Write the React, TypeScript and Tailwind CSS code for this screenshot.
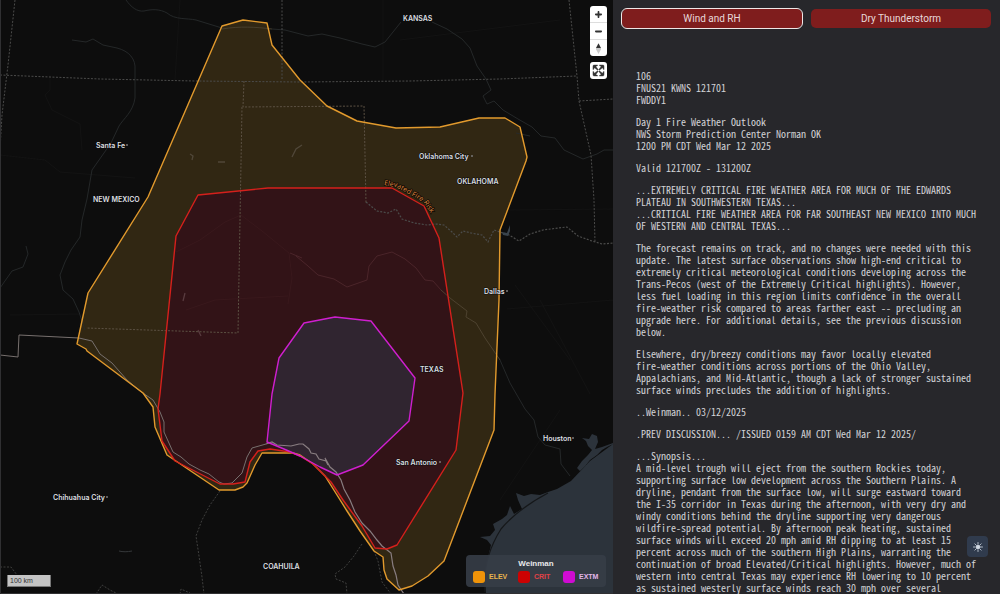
import { useState } from 'react';

const DISCUSSION: string[] = [
  `106
FNUS21 KWNS 121701
FWDDY1`,
  `Day 1 Fire Weather Outlook
NWS Storm Prediction Center Norman OK
1200 PM CDT Wed Mar 12 2025`,
  `Valid 121700Z - 131200Z`,
  `...EXTREMELY CRITICAL FIRE WEATHER AREA FOR MUCH OF THE EDWARDS
PLATEAU IN SOUTHWESTERN TEXAS...
...CRITICAL FIRE WEATHER AREA FOR FAR SOUTHEAST NEW MEXICO INTO MUCH
OF WESTERN AND CENTRAL TEXAS...`,
  `The forecast remains on track, and no changes were needed with this
update. The latest surface observations show high-end critical to
extremely critical meteorological conditions developing across the
Trans-Pecos (west of the Extremely Critical highlights). However,
less fuel loading in this region limits confidence in the overall
fire-weather risk compared to areas farther east -- precluding an
upgrade here. For additional details, see the previous discussion
below.`,
  `Elsewhere, dry/breezy conditions may favor locally elevated
fire-weather conditions across portions of the Ohio Valley,
Appalachians, and Mid-Atlantic, though a lack of stronger sustained
surface winds precludes the addition of highlights.`,
  `..Weinman.. 03/12/2025`,
  `.PREV DISCUSSION... /ISSUED 0159 AM CDT Wed Mar 12 2025/`,
  `...Synopsis...
A mid-level trough will eject from the southern Rockies today,
supporting surface low development across the Southern Plains. A
dryline, pendant from the surface low, will surge eastward toward
the I-35 corridor in Texas during the afternoon, with very dry and
windy conditions behind the dryline supporting very dangerous
wildfire-spread potential. By afternoon peak heating, sustained
surface winds will exceed 20 mph amid RH dipping to at least 15
percent across much of the southern High Plains, warranting the
continuation of broad Elevated/Critical highlights. However, much of
western into central Texas may experience RH lowering to 10 percent
as sustained westerly surface winds reach 30 mph over several`,
];

const ELEVATED =
  'M222 26 243 20 267 23 272 45 300 80 327 106 357 121 396 128 440 127 479 118 505 118 520 127 527 157 526 161 500 230 499 300 495 394 494 430 444 561 428 576 412 586 399 590 387 579 384 570 383 557 374 551 360 531 347 511 337 495 325 476 313 464 300 455 293 453 262 453 255 465 247 483 243 487 235 490 219 490 167 455 155 427 153 407 143 393 87 351 86 349 77 344 88 293 148 197Z';
const CRITICAL =
  'M198 195 268 188 392 188 424 206 439 238 463 393 456 450 397 545 387 549 375 548 362 526 343 500 331 482 313 464 300 456 290 452 270 449 258 451 250 462 245 482 233 484 220 484 175 461 162 441 158 409 160 394 176 236Z';
const EXTREME =
  'M304 323 335 317 371 321 415 378 409 421 363 465 337 475 320 467 300 456 284 449 267 442 272 394 279 358Z';

const PLACES = [
  { name: 'KANSAS', x: 403, y: 21 },
  { name: 'NEW MEXICO', x: 93, y: 202 },
  { name: 'OKLAHOMA', x: 457, y: 184 },
  { name: 'TEXAS', x: 420, y: 372 },
  { name: 'COAHUILA', x: 263, y: 569 },
  { name: 'Santa Fe', x: 96, y: 148, dot: 127 },
  { name: 'Oklahoma City', x: 419, y: 159, dot: 472 },
  { name: 'Dallas', x: 484, y: 294, dot: 507 },
  { name: 'Houston', x: 543, y: 441, dot: 573 },
  { name: 'San Antonio', x: 396, y: 465, dot: 440 },
  { name: 'Chihuahua City', x: 53, y: 500, dot: 107 },
];

const LEGEND = [
  { label: 'ELEV', swatch: 'bg-[#ef9309]', text: 'text-[#eab54e]' },
  { label: 'CRIT', swatch: 'bg-[#cc0202]', text: 'text-[#e04247]' },
  { label: 'EXTM', swatch: 'bg-[#cf0bd2]', text: 'text-[#e3b6ea]' },
];

function MapCanvas() {
  return (
    <svg
      className="absolute inset-0 h-full w-full"
      viewBox="0 0 613 594"
      preserveAspectRatio="xMidYMid slice"
      fill="none"
      role="img"
      aria-label="Fire weather outlook map"
    >
      <rect width="613" height="594" fill="#0d0d0d" />

      {/* faint road grid */}
      <g stroke="#161616" strokeWidth=".7">
        <path d="M50 75V90L45 95 52 110 80 124 82 150M0 155 45 160 60 172 135 178M383 0V80M400 40 560 20M507 309 613 300M510 210 613 209M515 285 570 360M540 300 590 394M500 500 560 410M10 315 80 314M180 0 175 80" />
      </g>

      {/* Gulf of Mexico */}
      <path
        d="M613 444 607 447 602 450 597 455 590 460 586 465 580 471 577 468 582 461 588 455 592 450 588 446 586 441 582 438 589 439 592 434 597 436 598 442 595 449 602 447 613 443V594H486L485 580 486 565 488 557 491 545 487 540 480 537 490 536 495 530 493 524 502 519 507 515 510 506 514 514 522 509 518 500 516 493 524 496 531 494 540 495 548 492 557 489 571 481 590 461Z"
        fill="#2c333b"
      />
      <path d="M485 592C483 570 489 548 501 529 512 516 529 503 548 493" stroke="#151719" strokeWidth="1.2" />

      <path d={ELEVATED} fill="#312713" />
      <path d={CRITICAL} fill="#321317" />
      <path d={EXTREME} fill="#302530" />

      {/* rivers */}
      <g stroke="#272a2b" strokeWidth=".9">
        <path d="M126 0C131 7 137 12 144 11 152 9 160 9 167 13 175 20 187 18 196 20L222 28M272 29 285 30 308 36 322 34 340 38 362 44 375 47 385 42 401 22M432 22 447 29 462 39 470 48 477 66 486 79 491 90 483 96 487 104 494 101 503 110 518 119 532 127 541 136 555 138 564 150 583 159 597 154 604 150 613 150" />
        <path d="M222 29C240 26 256 27 272 29" stroke="#4b4230" />
        <path d="M72 40 86 42 93 39 103 45 117 48C129 51 136 59 135 70L135 98C133 112 124 118 119 126L111 143 92 170 87 199 82 220 80 237 71 250 65 262 60 275 63 290 73 299 79 312 85 330" />
        <path d="M26 246 28 254 23 267 12 271 0 288M516 133 530 136" />
        <path d="M500 360 510 383 525 409 534 420 538 437 545 445 560 449 561 464 570 476" />
      </g>
      <g stroke="#5a3035" strokeWidth=".9" opacity=".7">
        <path d="M296 256 308 266 318 275 334 279 347 287 367 280 369 266 377 256 392 252 405 259 416 268 425 280 433 281 441 290M290 253 302 258" />
        <path d="M176 252 200 240 225 222 241 215 262 231 289 253 292 278 288 304M186 310 215 300 288 296" opacity=".3" />
      </g>
      <path d="M441 290 450 298 467 311 466 317 476 323 485 338 500 360" stroke="#504532" strokeWidth=".9" />

      {/* state borders */}
      <g stroke="#4b4b4a" strokeWidth="1" strokeDasharray="2 1.5">
        <path d="M15 0 8 65 2 115 0 150M0 75 100 79 195 81 300 82 410 81 500 79 577 76M282 0V80M569 0 577 76 579 101 591 155 594 200 595 243M579 101 613 99" />
        <path d="M244 81 243 107 364 106 366 203M242 107 238 333 86 328" stroke="#5c5143" />
        <path
          d="M366 202 377 211 388 213 396 209 402 219 414 223 427 225 436 224 444 225 452 232 457 237 463 231 471 233 482 235 488 242 494 230 500 232 509 235 519 241 530 234 543 230 558 228 567 227 578 236 592 241 602 244 613 243"
          strokeWidth="1.2"
        />
        <path
          d="M220 491 210 505 202 520 196 536 199 556 202 577 204 594M96 594 102 585 110 590 118 594M180 594 181 589 190 593M362 544 354 556 345 567 335 574 336 579 346 583 347 594M374 551 378 561 382 582 391 594"
          strokeWidth=".8"
        />
        <path d="M0 567H11L17 575" strokeWidth=".8" />
      </g>

      {/* national border */}
      <path d="M0 355 18 357 19 335 79 338 92 341 100 354 112 363 127 380 140 391 153 400 160 412 164 422 164 432 173 452 181 457 189 464 200 470 209 474 219 482 224 484 232 483 242 473 247 457 252 448 266 444" stroke="#77706e" strokeWidth="1" />
      <path d="M266 444 272 442 277 445 291 446 299 444 303 444 309 449 311 453 316 454 319 459 326 461 328 465 325 458 330 467 336 472 341 480 344 489 350 500 355 512 362 523 370 531 377 540 382 546 391 553 393 566 396 575 398 585 404 594" stroke="#887d80" strokeWidth="1.2" />

      {/* lakes */}
      <g stroke="#504739" strokeWidth="1.3">
        <path d="M190 154 193 156 192 160M218 162 225 162M302 145 296 149 292 157" />
        <path d="m185 293-2 8M198 330l3 6" stroke="#593b3f" />
      </g>
      <path d="m502 232 5 1 3-8 0 6-2 5-5-1" fill="#39434c" />
      <path d="M119 551c4 1 8 1 13 0" stroke="#35383a" />

      <g strokeWidth="1.4" strokeLinejoin="round">
        <path d={ELEVATED} stroke="#e29a2d" />
        <path d={CRITICAL} stroke="#d5201c" />
        <path d={EXTREME} stroke="#cf1fcf" />
      </g>

      <g className="font-[Inter,sans-serif] text-[7px] font-semibold" fill="#dcdfe0" stroke="#0d0d0d" strokeWidth="1" paintOrder="stroke">
        {PLACES.map((place) => (
          <text key={place.name} x={place.x} y={place.y}>
            {place.name}
          </text>
        ))}
      </g>
      <g fill="#777">
        {PLACES.filter((place) => place.dot).map((place) => (
          <circle key={place.name} cx={place.dot} cy={place.y - 3} r="1" />
        ))}
      </g>

      <path id="risk-label" d="M384 185 396 187 416 198 424 203 434 218" />
      <text className="font-['Open_Sans',sans-serif] text-[7px] font-medium" fill="#e08c40" stroke="#100b05" strokeWidth="1.5" paintOrder="stroke">
        <textPath href="#risk-label">Elevated Fire Risk</textPath>
      </text>

      <path d="M.5 0V593.500H613" stroke="#303032" />
    </svg>
  );
}

function MapControls() {
  return (
    <div className="absolute top-1.5 right-1.5 flex flex-col gap-1.5">
      <div className="divide-y divide-[#ddd] overflow-hidden rounded-[3px] bg-white">
        <button type="button" aria-label="Zoom in" className="block h-[17px] w-[17px]">
          <svg viewBox="0 0 29 29" fill="#333">
            <path d="M14.5 8.5c-.75 0-1.5.75-1.5 1.5v3h-3c-.75 0-1.5.75-1.5 1.5S9.25 16 10 16h3v3c0 .75.75 1.5 1.5 1.5S16 19.75 16 19v-3h3c.75 0 1.5-.75 1.5-1.5S19.75 13 19 13h-3v-3c0-.75-.75-1.5-1.5-1.5z" />
          </svg>
        </button>
        <button type="button" aria-label="Zoom out" className="block h-[17px] w-[17px]">
          <svg viewBox="0 0 29 29" fill="#333">
            <path d="M10 13c-.75 0-1.5.75-1.5 1.5S9.25 16 10 16h9c.75 0 1.5-.75 1.5-1.5S19.75 13 19 13z" />
          </svg>
        </button>
        <button type="button" aria-label="Reset bearing to north" className="block h-4 w-[17px]">
          <svg viewBox="0 0 29 29" fill="#333">
            <path d="m10 14 4.500-8.500L19 14z" />
            <path fill="#ccc" d="m10 15.500 4.500 8.500 4.500-8.500z" />
          </svg>
        </button>
      </div>
      <button type="button" aria-label="Enter fullscreen" className="h-[17px] w-[17px] rounded-[3px] bg-white">
        <svg viewBox="0 0 29 29" fill="#333" stroke="#333" strokeWidth=".6">
          <path d="M24 16v5.500c0 1.750-.75 2.500-2.500 2.500H16v-1l3-1.500-4-5.500 1-1 5.500 4 1.500-3zM6 16l1.500 3 5.500-4 1 1-4 5.500 3 1.500v1H7.500C5.750 24 5 23.250 5 21.500V16zm7-11v1l-3 1.500 4 5.500-1 1-5.500-4L6 13H5V7.500C5 5.750 5.750 5 7.500 5zm11 2.500c0-1.750-.75-2.500-2.500-2.500H16v1l3 1.500-4 5.500 1 1 5.500-4 1.500 3h1z" />
        </svg>
      </button>
    </div>
  );
}

function Legend() {
  return (
    <div className="absolute right-[7px] bottom-[7px] rounded bg-[#363d47]/90 px-[7px] py-1 font-['Liberation_Sans',sans-serif] font-bold">
      <p className="text-center text-[8px] leading-[10px] text-[#e8e8ea]">Weinman</p>
      <ul className="mt-0.5 flex gap-[9px] text-[7px] leading-3">
        {LEGEND.map((item) => (
          <li key={item.label} className="flex w-9 items-center gap-1">
            <span className={`h-3 w-3 shrink-0 rounded-[3px] ${item.swatch}`} />
            <span className={item.text}>{item.label}</span>
          </li>
        ))}
      </ul>
    </div>
  );
}

function SunIcon() {
  return (
    <svg className="h-2.5 w-2.5" viewBox="0 0 20 20" fill="#d3dae4" stroke="#d3dae4" strokeWidth="1.6" strokeLinecap="round">
      <circle cx="10" cy="10" r="4" />
      <path d="M10 1v2.500M10 16.500V19M1 10h2.500M16.500 10H19M3.700 3.700l1.700 1.700M14.600 14.600l1.700 1.700M3.700 16.300l1.700-1.700M14.600 5.400l1.700-1.700" />
    </svg>
  );
}

export default function App() {
  const [tab, setTab] = useState('wind');

  const tabs = [
    { id: 'wind', label: 'Wind and RH' },
    { id: 'dry', label: 'Dry Thunderstorm' },
  ];

  return (
    <div className="grid h-screen grid-cols-[613fr_387fr] overflow-hidden bg-[#0d0d0d]">
      <main className="relative overflow-hidden">
        <MapCanvas />
        <MapControls />
        <div className="absolute bottom-[7px] left-[7px] h-3 w-11 border border-t-0 border-[#777] bg-[#c4c4c4] px-0.5 font-['Liberation_Sans',sans-serif] text-[7px] leading-[11px] text-[#333]">
          100 km
        </div>
        <Legend />
      </main>

      <aside className="relative overflow-hidden bg-[#27272b]">
        <div className="grid grid-cols-2 gap-[9px] px-[9px] pt-[9px]">
          {tabs.map((item) => (
            <button
              key={item.id}
              type="button"
              aria-pressed={tab === item.id}
              onClick={() => setTab(item.id)}
              className={`h-[19px] rounded-[5px] bg-[#7f1d1d] font-[Roboto,sans-serif] text-[10px] text-[#e8d9da] ${
                tab === item.id ? 'outline outline-[#eee6e6]' : ''
              }`}
            >
              {item.label}
            </button>
          ))}
        </div>
        <article className="flex flex-col gap-2.5 px-[23px] pt-[42px] font-['Noto_Sans_Mono_CJK_SC','DejaVu_Sans_Mono',monospace] text-[10px] leading-3 text-[#d2d2d6]">
          {DISCUSSION.map((block) => (
            <p key={block} className="whitespace-pre">
              {block}
            </p>
          ))}
        </article>
        <button
          type="button"
          aria-label="Toggle light mode"
          className="absolute right-3 bottom-[37px] flex h-[21px] w-[21px] items-center justify-center rounded bg-[#303b4d]"
        >
          <SunIcon />
        </button>
      </aside>
    </div>
  );
}
